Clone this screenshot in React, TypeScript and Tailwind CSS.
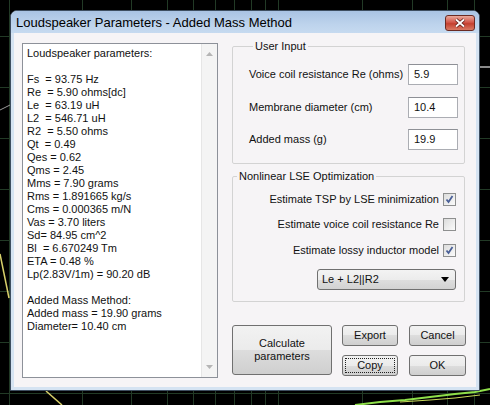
import React from "react";

const lines = [
  "Loudspeaker parameters:",
  "",
  "Fs  = 93.75 Hz",
  "Re  = 5.90 ohms[dc]",
  "Le  = 63.19 uH",
  "L2  = 546.71 uH",
  "R2  = 5.50 ohms",
  "Qt  = 0.49",
  "Qes = 0.62",
  "Qms = 2.45",
  "Mms = 7.90 grams",
  "Rms = 1.891665 kg/s",
  "Cms = 0.000365 m/N",
  "Vas = 3.70 liters",
  "Sd= 84.95 cm^2",
  "Bl  = 6.670249 Tm",
  "ETA = 0.48 %",
  "Lp(2.83V/1m) = 90.20 dB",
  "",
  "Added Mass Method:",
  "Added mass = 19.90 grams",
  "Diameter= 10.40 cm",
];

const vx = [9, 82, 131, 167, 193, 215, 234, 251, 265, 278, 362, 412, 447, 474];
const hy = [36, 87, 138, 189, 240, 291, 342, 393];

function Background() {
  return (
    <svg className="absolute inset-0" width="490" height="405" viewBox="0 0 490 405">
      {vx.map((x) => (
        <line key={"v" + x} x1={x + 0.5} y1="0" x2={x + 0.5} y2="405" stroke="#223a26" strokeWidth="1" />
      ))}
      {hy.map((y) => (
        <line key={"h" + y} x1="0" y1={y + 0.5} x2="490" y2={y + 0.5} stroke="#223a26" strokeWidth="1" />
      ))}
      <polyline points="0,110 4,108 8,106 12,104" fill="none" stroke="#9a9a9a" strokeWidth="1" />
      <line x1="478" y1="67" x2="490" y2="67" stroke="#8a8a8a" strokeWidth="2" />
      <line x1="0" y1="254" x2="9" y2="298" stroke="#d8d06a" strokeWidth="1.5" />
      <line x1="46" y1="391" x2="62" y2="405" stroke="#d8d06a" strokeWidth="1.5" />
      <polyline
        points="355,405 380,402 405,400 430,397 455,394 475,392 490,389"
        fill="none"
        stroke="#8fe04a"
        strokeWidth="2"
      />
      <polyline points="400,402 430,400 455,398 480,395" fill="none" stroke="#c8d85a" strokeWidth="1" />
    </svg>
  );
}

function Check({ checked }: { checked: boolean }) {
  return (
    <div className="w-[13px] h-[13px] border border-[#8e8f8f] bg-gradient-to-br from-[#dcdcdc] to-[#fbfbfb] flex items-center justify-center">
      {checked && (
        <svg width="11" height="11" viewBox="0 0 11 11">
          <path d="M2.5 5.5 L4.5 8 L8.5 2" fill="none" stroke="#4a5f97" strokeWidth="1.8" />
        </svg>
      )}
    </div>
  );
}

function Btn({ children, className = "" }: { children: React.ReactNode; className?: string }) {
  return (
    <div
      className={
        "rounded-[3px] border border-[#707070] bg-[linear-gradient(#f2f2f2_0%,#ebebeb_50%,#dddddd_50%,#cfcfcf_100%)] flex items-center justify-center text-center text-[11px] leading-[13px] text-[#111] " +
        className
      }
    >
      {children}
    </div>
  );
}

export default function App() {
  return (
    <div
      className="relative w-[490px] h-[405px] overflow-hidden bg-black"
      style={{ fontFamily: '"Liberation Sans", Arial, sans-serif' }}
    >
      <Background />
      <div className="absolute left-[10px] top-[10px] w-[470px] h-[381px] flex flex-col rounded-t-[7px] border border-[#3e4e60] bg-[#d5e3f2]">
        <div className="h-[22px] flex items-center justify-between rounded-t-[6px] bg-[linear-gradient(#a9c3e3,#bdd3ec_60%,#c6daf0)] pl-[5px] pr-[4px]">
          <span className="text-[13px] text-black leading-[15px] pt-[1px]">Loudspeaker Parameters - Added Mass Method</span>
          <div className="w-[30px] h-[16px] mt-[1px] rounded-[3px] border border-[#6a2a22] bg-[linear-gradient(#e9a99b,#d2574a_45%,#c4402f_55%,#d97a64)] flex items-center justify-center">
            <svg width="12" height="10" viewBox="0 0 12 10">
              <path d="M2 1.5 L10 8.5 M10 1.5 L2 8.5" stroke="#5a1a14" strokeWidth="3.4" />
              <path d="M2 1.5 L10 8.5 M10 1.5 L2 8.5" stroke="#ffffff" strokeWidth="1.8" />
            </svg>
          </div>
        </div>
        <div className="flex-1 mx-[3px] mb-[3px] bg-[#f6f4f6] flex pl-[8px] pt-[7px]">
          <div className="mt-[3px] w-[196px] h-[335px] border border-[#8d9199] bg-white flex">
            <div className="flex-1 pl-[4px] pt-[3px] text-[11px] leading-[13px] text-[#111] whitespace-pre">
              {lines.map((l, i) => (
                <div key={i} className="h-[13px]">
                  {l}
                </div>
              ))}
            </div>
            <div className="w-[16px] bg-[#f4f4f4] border-l border-[#e6e6e6] flex flex-col justify-between items-center py-[8px]">
              <svg width="7" height="4" viewBox="0 0 7 4">
                <path d="M0 4 L3.5 0 L7 4 Z" fill="#b5b5b5" />
              </svg>
              <svg width="7" height="4" viewBox="0 0 7 4">
                <path d="M0 0 L3.5 4 L7 0 Z" fill="#b5b5b5" />
              </svg>
            </div>
          </div>

          <div className="ml-[14px] w-[234px] flex flex-col text-[11px] text-[#111]">
            <fieldset className="w-[233px] border border-[#d3d3d3] rounded-[2px] pl-[16px] pr-[6px] pt-[12px] pb-[13px]">
              <legend className="ml-[4px] px-[2px] leading-[12px]">User Input</legend>
              <div className="flex flex-col gap-[11.5px]">
                {[
                  ["Voice coil resistance Re (ohms)", "5.9"],
                  ["Membrane diameter (cm)", "10.4"],
                  ["Added mass (g)", "19.9"],
                ].map(([l, v]) => (
                  <div key={l} className="flex items-center justify-between h-[21px]">
                    <span className="leading-[13px]">{l}</span>
                    <div className="w-[50px] h-[21px] border border-[#abadb3] border-t-[#8e9096] bg-white pl-[5px] flex items-center leading-[13px]">
                      {v}
                    </div>
                  </div>
                ))}
              </div>
            </fieldset>

            <fieldset className="mt-[6px] w-[233px] border border-[#d3d3d3] rounded-[2px] pr-[8px] pt-[9px] pb-[11px]">
              <legend className="ml-[4px] px-[2px] leading-[12px]">Nonlinear LSE Optimization</legend>
              <div className="flex flex-col items-end gap-[9.5px]">
                {[
                  ["Estimate TSP by LSE minimization", true],
                  ["Estimate voice coil resistance Re", false],
                  ["Estimate lossy inductor model", true],
                ].map(([l, c]) => (
                  <div key={l as string} className="h-[16px] flex items-center gap-[4px]">
                    <span className="leading-[13px]">{l as string}</span>
                    <Check checked={c as boolean} />
                  </div>
                ))}
                <div className="mt-[1.5px] w-[139px] h-[21px] rounded-[3px] border border-[#707070] bg-[linear-gradient(#f3f3f3_0%,#ececec_50%,#dedede_50%,#d2d2d2_100%)] flex items-center justify-between pl-[3px] pr-[6px]">
                  <span className="leading-[13px] pl-[1px]">Le + L2||R2</span>
                  <svg width="8" height="5" viewBox="0 0 8 5">
                    <path d="M0 0 L8 0 L4 5 Z" fill="#000" />
                  </svg>
                </div>
              </div>
            </fieldset>

            <div className="mt-[23px] flex">
              <Btn className="w-[100px] h-[50px]">
                Calculate
                <br />
                parameters
              </Btn>
              <div className="ml-[10px] grid grid-cols-[56px_57px] grid-rows-[21px_21px] gap-x-[11px] gap-y-[8.5px]">
                <Btn>Export</Btn>
                <Btn>Cancel</Btn>
                <Btn className="border-[#3c7fb1] p-[2px]">
                  <div className="w-full h-full border border-dotted border-[#202020] flex items-center justify-center">Copy</div>
                </Btn>
                <Btn>OK</Btn>
              </div>
            </div>
          </div>
        </div>
      </div>
    </div>
  );
}
